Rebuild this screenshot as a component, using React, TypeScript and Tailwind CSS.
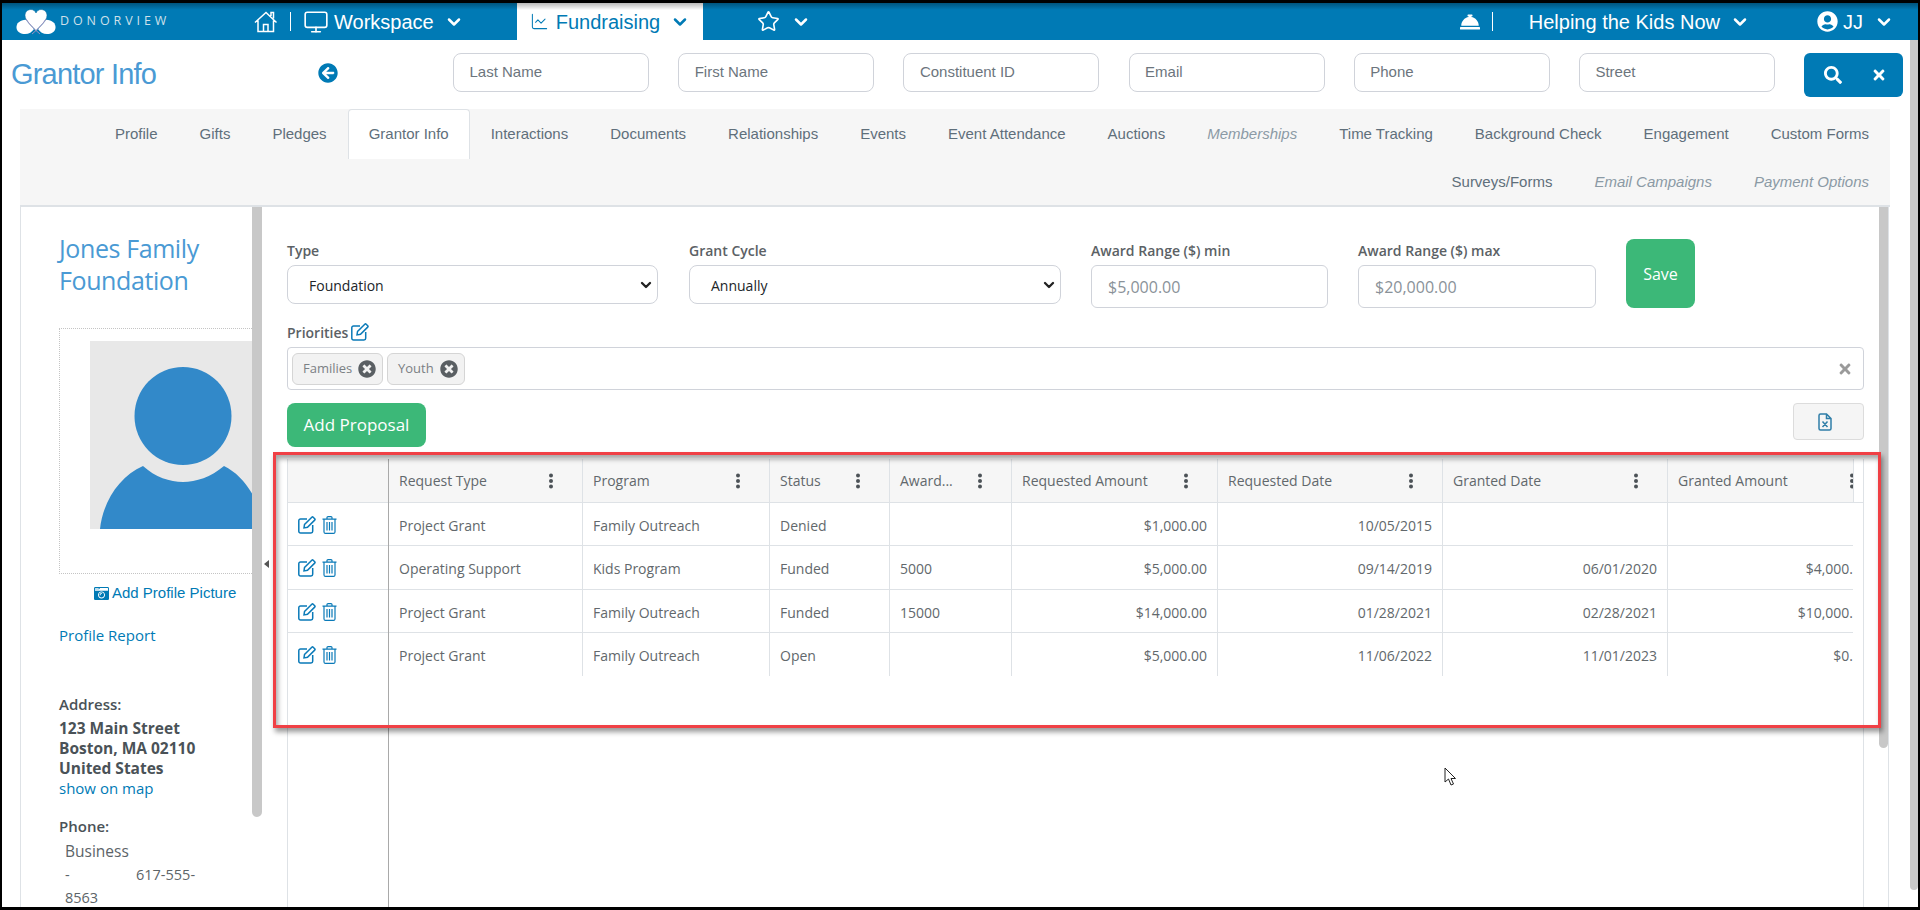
import React from 'react';
import { ChevronDown, Monitor, Star, ChartLine } from 'lucide-react';
import { FaArrowCircleLeft, FaCameraRetro, FaConciergeBell, FaSearch, FaTimes, FaTimesCircle, FaUserCircle } from 'react-icons/fa';

const topTabs = [
  ['Profile'], ['Gifts'], ['Pledges'], ['Grantor Info', 'active'], ['Interactions'], ['Documents'], ['Relationships'],
  ['Events'], ['Event Attendance'], ['Auctions'], ['Memberships', 'off'], ['Time Tracking'], ['Background Check'],
  ['Engagement'], ['Custom Forms'], ['Surveys/Forms'], ['Email Campaigns', 'off'], ['Payment Options', 'off'],
];

const searchFields = ['Last Name', 'First Name', 'Constituent ID', 'Email', 'Phone', 'Street'];

const columns = [
  { name: 'Request Type', w: 'w-[194px]', menu: 'pr-[29px]' },
  { name: 'Program', w: 'w-[187px]', menu: 'pr-[29px]' },
  { name: 'Status', w: 'w-[120px]', menu: 'pr-[29px]' },
  { name: 'Award...', w: 'w-[122px]', menu: 'pr-[29px]' },
  { name: 'Requested Amount', w: 'w-[206px]', menu: 'pr-[29px]' },
  { name: 'Requested Date', w: 'w-[225px]', menu: 'pr-[29px]' },
  { name: 'Granted Date', w: 'w-[225px]', menu: 'pr-[29px]' },
  { name: 'Granted Amount', w: 'w-[212px]', menu: 'pr-[25px]' },
];

const rows = [
  { h: 'h-[43px]', cells: ['Project Grant', 'Family Outreach', 'Denied', '', '$1,000.00', '10/05/2015', '', ''] },
  { h: 'h-[44px]', cells: ['Operating Support', 'Kids Program', 'Funded', '5000', '$5,000.00', '09/14/2019', '06/01/2020', '$4,000.00'] },
  { h: 'h-[43px]', cells: ['Project Grant', 'Family Outreach', 'Funded', '15000', '$14,000.00', '01/28/2021', '02/28/2021', '$10,000.00'] },
  { h: 'h-[43px]', cells: ['Project Grant', 'Family Outreach', 'Open', '', '$5,000.00', '11/06/2022', '11/01/2023', '$0.00'] },
];

function Logo() {
  return (
    <svg width="40" height="26" viewBox="0 0 40 26" className="shrink-0">
      <path d="M12 11C5 10 0 14 .5 19C1 23 5 25 9 25C13 25 16 23 18 20Z" fill="#fff" />
      <path d="M28 11C35 10 40 14 39.500 19C39 23 35 25 31 25C27 25 24 23 22 20Z" fill="#fff" />
      <path d="M20 22C16 17 9 12 9 6.500C9 2.500 12 .5 15 .5C17.500 .5 19 2 20 4C21 2 22.500 .5 25 .5C28 .5 31 2.500 31 6.500C31 12 24 17 20 22Z" fill="#fff" stroke="#0a6ea3" strokeWidth=".6" />
      <path d="M10 10C14 16 18 20 24 25M30 10C26 16 22 20 16 25" fill="none" stroke="#9b8fc0" strokeWidth="1" />
    </svg>
  );
}

function HomeIcon() {
  return (
    <svg width="24" height="22" viewBox="0 0 24 22" fill="none" stroke="#fff" strokeWidth="1.500" className="shrink-0">
      <path d="M1 11.500 12 1.500l10.500 10M4 9.500V20.500H19.500V9.500M9.500 20.500v-7h4.500v7M17 5V1.500h2.500V7.500" />
    </svg>
  );
}

function EditIcon({ size = 18 }: { size?: number }) {
  return (
    <svg width={size} height={size} viewBox="0 0 18 18" fill="none" stroke="#0a7ab8" strokeWidth="1.500" className="shrink-0">
      <path d="M9 3H2.500A1.700 1.700 0 0 0 .8 4.700v10.500a1.700 1.700 0 0 0 1.700 1.700h10.500a1.700 1.700 0 0 0 1.700-1.700V9" />
      <path d="M6.500 8.500 13.800 1.200a1 1 0 0 1 1.400 0l1.500 1.500a1 1 0 0 1 0 1.400L9.500 11.300l-3.500.6Z" />
    </svg>
  );
}

function TrashIcon() {
  return (
    <svg width="15" height="18" viewBox="0 0 15 18" fill="none" stroke="#0a7ab8" strokeWidth="1.200" className="shrink-0">
      <path d="M.5 3.200h14M5 3V1.600a1 1 0 0 1 1-1h3a1 1 0 0 1 1 1V3M2 3.200V16a1.500 1.500 0 0 0 1.500 1.400h8A1.500 1.500 0 0 0 13 16V3.200M5 6v8.500M7.500 6v8.500M10 6v8.500" />
    </svg>
  );
}

function Kebab() {
  return (
    <svg width="4" height="16" viewBox="0 0 4 16" className="shrink-0" fill="#4c5257">
      <circle cx="2" cy="2.500" r="2" />
      <circle cx="2" cy="8" r="2" />
      <circle cx="2" cy="13.500" r="2" />
    </svg>
  );
}

function Avatar() {
  return (
    <svg width="162" height="188" viewBox="0 0 162 188" className="shrink-0 bg-[#e8e8e8]">
      <ellipse cx="93" cy="75" rx="48.500" ry="49" fill="#3289c9" />
      <path d="M10 188C13 160 30 135 53 125C65 136 80 141 93 141C106 141 121 136 134 125C150 133 162 148 170 170V188Z" fill="#3289c9" />
    </svg>
  );
}

function NavChevron({ className = 'text-white' }: { className?: string }) {
  return <ChevronDown size={20} strokeWidth={3} className={className} />;
}

function TopNav() {
  return (
    <div className="flex h-[37px] shrink-0 items-center bg-[linear-gradient(#00537c_0,#007ab5_7px)] font-['Liberation_Sans',sans-serif] text-[20px] text-white">
      <div className="ml-[14px] flex w-[238px] items-center">
        <Logo />
        <span className="ml-[4px] text-[12.500px] tracking-[3.900px] text-[#cfe0ea] font-['Open_Sans',sans-serif]">DONORVIEW</span>
      </div>
      <HomeIcon />
      <span className="ml-[12px] h-[19px] w-[1px] bg-white" />
      <Monitor size={26} strokeWidth={1.500} className="ml-[12px]" />
      <span className="ml-[5px]">Workspace</span>
      <NavChevron className="ml-[10px] text-white" />
      <div className="ml-[53px] flex h-full w-[186px] items-center bg-[linear-gradient(#b9b9b9_0,#fff_7px)] pl-[13px] text-[#007ab5]">
        <ChartLine size={19} strokeWidth={1.300} />
        <span className="ml-[7px]">Fundraising</span>
        <NavChevron className="ml-[10px] text-[#007ab5]" />
      </div>
      <Star size={23} strokeWidth={1.700} className="ml-[54px]" />
      <NavChevron className="ml-[11px] text-white" />
      <div className="ml-auto flex items-center">
        <FaConciergeBell size={20} />
        <span className="ml-[12px] h-[19px] w-[1px] bg-white" />
        <span className="ml-[36px]">Helping the Kids Now</span>
        <NavChevron className="ml-[10px] text-white" />
        <FaUserCircle size={21} className="ml-[67px]" />
        <span className="ml-[5px]">JJ</span>
        <NavChevron className="ml-[11px] mr-[24px] text-white" />
      </div>
    </div>
  );
}

function SearchRow() {
  return (
    <div className="flex h-[69px] shrink-0 items-start font-['Liberation_Sans',sans-serif]">
      <h1 className="ml-[9px] mt-[16px] w-[307px] text-[29px] leading-[36px] tracking-[-0.800px] text-[#4a9ad4]">Grantor Info</h1>
      <FaArrowCircleLeft size={20} className="mt-[23px] text-[#007ab5]" />
      <div className="ml-[115px] mt-[13px] flex gap-[29.200px]">
        {searchFields.map(f => (
          <div key={f} className="flex h-[39px] w-[196px] items-center rounded-lg border border-[#d0d3da] bg-white pl-[15.500px] text-[15px] text-[#6c757d]">
            {f}
          </div>
        ))}
      </div>
      <div className="ml-[29px] mt-[13px] flex h-[44px] w-[99px] items-center justify-between rounded-md bg-[#007ab5] pl-[20px] pr-[16px] text-white">
        <FaSearch size={18} />
        <FaTimes size={16} />
      </div>
    </div>
  );
}

function TabBar() {
  return (
    <div className="ml-[18px] mr-[20px] flex shrink-0 flex-wrap justify-end border-b-[2px] border-[#dee2e6] bg-[#f6f6f6] font-['Liberation_Sans',sans-serif] text-[15px]">
      {topTabs.map(([t, kind]) => (
        <div key={t} className="flex h-[48px] flex-none">
          {kind === 'active' ? (
            <span className="z-10 flex h-[50px] items-center rounded-t border border-b-0 border-[#dee2e6] bg-white px-[20px] text-[#5f6f7b]">{t}</span>
          ) : (
            <span className={`flex items-center px-[21px] pt-[2px] ${kind === 'off' ? 'italic text-[#8b9aa5]' : 'text-[#5f6f7b]'}`}>{t}</span>
          )}
        </div>
      ))}
    </div>
  );
}

function ProfilePanel() {
  return (
    <div className="flex h-full w-[242px] shrink-0 overflow-hidden border-l border-[#dee2e6]">
      <div className="w-[231px] shrink-0 pl-[38px]">
        <h2 className="mt-[25px] text-[25px] leading-[32px] tracking-[-0.400px] text-[#4a9ad4]">Jones Family Foundation</h2>
        <div className="mt-[32px] h-[246px] border border-r-0 border-dotted border-[#c4c4c4] pl-[30px] pt-[12px]">
          <Avatar />
        </div>
        <div className="mt-[9px] flex items-center pl-[35px] font-['Liberation_Sans',sans-serif] text-[15px] leading-[20px] text-[#007ab5]">
          <FaCameraRetro size={15} />
          <span className="ml-[3px] whitespace-nowrap">Add Profile Picture</span>
        </div>
        <div className="mt-[22px] text-[15px] leading-[20px] text-[#007ab5]">Profile Report</div>
        <div className="mt-[49px] text-[15px] font-semibold leading-[20px] text-[#4a5257]">Address:</div>
        <div className="mt-[4px] text-[15.500px] font-bold leading-[20px] text-[#4a5257]">
          123 Main Street
          <br />
          Boston, MA 02110
          <br />
          United States
        </div>
        <div className="text-[15px] leading-[20px] text-[#007ab5]">show on map</div>
        <div className="mt-[18px] text-[15px] font-semibold leading-[20px] text-[#4a5257]">Phone:</div>
        <div className="ml-[6px] mt-[4px] text-[15.500px] leading-[23px] text-[#5c6468]">
          <div>Business</div>
          <div className="flex text-[14.500px]">
            <span className="w-[71px]">-</span>
            <span>617-555-</span>
          </div>
          <div className="text-[14.500px]">8563</div>
        </div>
      </div>
      <div className="h-[610px] w-[10px] rounded-b-md bg-[#c8c8c8]" />
    </div>
  );
}

function Field({ label, w, children }: { label: string; w: string; children: React.ReactNode }) {
  return (
    <div className={`${w} shrink-0 pt-[2px]`}>
      <div className="text-[14px] font-semibold leading-[20px] text-[#5b6165]">{label}</div>
      <div className="mt-[4px]">{children}</div>
    </div>
  );
}

function FakeSelect({ value }: { value: string }) {
  return (
    <div className="flex h-[39px] items-center justify-between rounded-lg border border-[#d0d3da] pl-[21px] pr-[3px] text-[14px] text-[#212529]">
      <span className="pt-[2px]">{value}</span>
      <ChevronDown size={16} strokeWidth={3.500} className="text-[#222]" />
    </div>
  );
}

function FakeInput({ value }: { value: string }) {
  return <div className="flex h-[43px] items-center rounded-md border border-[#d0d3da] pl-[16px] text-[16px] text-[#8a9299]">{value}</div>;
}

function Chip({ label, w }: { label: string; w: string }) {
  return (
    <div className={`flex h-[32px] ${w} items-center justify-between rounded-md border border-[#d5d5d5] bg-[#f2f2f2] pl-[10px] pr-[6px] text-[13px] text-[#7b8084]`}>
      {label}
      <FaTimesCircle size={18} className="text-[#5a5f63]" />
    </div>
  );
}

function ProposalTable() {
  return (
    <div className="flex h-[448px] w-[1577px] border-x border-[#dee2e6] text-[14px] text-[#62686c]">
      <div className="w-[101px] shrink-0 border-r border-[#a9a9a9]">
        <div className="h-[44px] border-b border-[#dee2e6] bg-[#f6f6f6]" />
        {rows.map((r, i) => (
          <div key={i} className={`flex ${r.h} items-start gap-[6px] border-b pl-[10px] pt-[13px] ${i === rows.length - 1 ? 'border-transparent' : 'border-[#dee2e6]'}`}>
            <EditIcon />
            <TrashIcon />
          </div>
        ))}
      </div>
      <div className="w-[1464px] shrink-0 overflow-hidden">
        <div className="flex h-[44px] w-max border-b border-[#dee2e6] bg-[#f6f6f6]">
          {columns.map(c => (
            <div key={c.name} className={`flex ${c.w} shrink-0 items-center justify-between border-r border-[#dee2e6] pl-[10px] ${c.menu}`}>
              <span>{c.name}</span>
              <Kebab />
            </div>
          ))}
        </div>
        {rows.map((r, i) => (
          <div key={i} className={`flex ${r.h} w-max ${i === rows.length - 1 ? '' : 'border-b border-[#dee2e6]'}`}>
            {r.cells.map((c, j) => (
              <div key={j} className={`flex ${columns[j].w} shrink-0 items-center border-r border-[#dee2e6] px-[10px] pt-[2px] ${j >= 4 ? 'justify-end' : ''}`}>
                {c}
              </div>
            ))}
          </div>
        ))}
      </div>
      <div className="h-[44px] w-[10px] shrink-0 border-b border-l border-[#dee2e6]" />
    </div>
  );
}

function GrantPanel() {
  return (
    <div className="flex h-full w-[1602px] shrink-0 border-r border-[#dee2e6]">
      <div className="w-[1577px] shrink-0 pt-[32px]">
        <div className="flex h-[69px] items-start">
          <Field label="Type" w="w-[371px]"><FakeSelect value="Foundation" /></Field>
          <Field label="Grant Cycle" w="ml-[31px] w-[372px]"><FakeSelect value="Annually" /></Field>
          <Field label="Award Range ($) min" w="ml-[30px] w-[237px]"><FakeInput value="$5,000.00" /></Field>
          <Field label="Award Range ($) max" w="ml-[30px] w-[238px]"><FakeInput value="$20,000.00" /></Field>
          <button className="ml-[30px] h-[69px] w-[69px] rounded-lg bg-[#3cb878] text-[16px] text-white">Save</button>
        </div>
        <div className="mt-[14px] flex h-[20px] items-center gap-[3px] text-[14px] font-semibold text-[#5b6165]">
          Priorities
          <EditIcon size={18} />
        </div>
        <div className="mt-[5px] flex h-[43px] items-center gap-[4px] rounded border border-[#d0d3da] pl-[4px] pr-[10px]">
          <Chip label="Families" w="w-[91px]" />
          <Chip label="Youth" w="w-[78px]" />
          <FaTimes size={16} className="ml-auto text-[#9a9a9a]" />
        </div>
        <div className="mt-[13px] flex h-[56px] items-start justify-between">
          <button className="h-[44px] w-[139px] rounded-lg bg-[#3cb878] text-[17px] text-white">Add Proposal</button>
          <div className="flex h-[37px] w-[71px] items-center justify-center rounded border border-[#dcdcdc] bg-[#f5f5f5] pr-[7px]">
            <svg width="14" height="18" viewBox="0 0 14 18" fill="none" stroke="#2f7ea8" strokeWidth="1.500">
              <path d="M1 2.500A1.500 1.500 0 0 1 2.500 1H8.500L13 5.500V15.500A1.500 1.500 0 0 1 11.500 17H2.500A1.500 1.500 0 0 1 1 15.500ZM8.500 1V5.500H13M4.500 8.500 9.500 14M9.500 8.500 4.500 14" />
            </svg>
          </div>
        </div>
        <ProposalTable />
      </div>
      <div className="ml-[15px] h-[541px] w-[9px] rounded-b-md bg-[#c8c8c8]" />
    </div>
  );
}

export default function App() {
  return (
    <div className="h-[910px] w-[1920px] overflow-hidden bg-black py-[3px] pl-[2px] pr-[2px] font-['Open_Sans',sans-serif]">
      <div className="relative flex h-[904px] flex-col bg-white">
        <TopNav />
        <div className="flex min-h-0 flex-1">
          <div className="flex w-[1908px] shrink-0 flex-col">
            <SearchRow />
            <TabBar />
            <div className="ml-[18px] flex min-h-0 flex-1">
              <ProfilePanel />
              <div className="w-[25px] shrink-0 pl-[2px] pt-[353px]">
                <div className="h-0 w-0 border-y-[4px] border-r-[5px] border-y-transparent border-r-[#555]" />
              </div>
              <GrantPanel />
            </div>
          </div>
          <div className="h-[850px] w-[8px] rounded-b bg-[#c8c8c8]" />
        </div>
        {/* red callout drawn over the table, plus the stray cursor */}
        <div className="pointer-events-none absolute left-[271px] top-[449px] h-[276px] w-[1608px] border-[3px] border-[#f04045] shadow-[2px_4px_5px_rgba(0,0,0,0.4),inset_2px_4px_5px_rgba(0,0,0,0.35)]" />
        <svg width="13" height="20" viewBox="0 0 13 20" className="absolute left-[1442px] top-[764px]" fill="#fff" stroke="#222" strokeWidth="1">
          <path d="M1 1V15L4.500 12L7 18L9.500 17L7 11.500H11.500Z" />
        </svg>
      </div>
    </div>
  );
}
